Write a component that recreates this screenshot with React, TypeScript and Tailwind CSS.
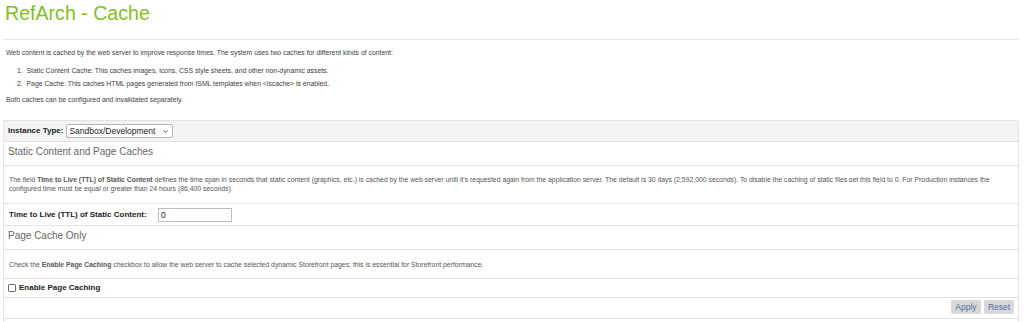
import { ChevronDown } from 'lucide-react';

export default function App() {
    return (
        <div className="min-h-screen bg-white font-['Liberation_Sans',Arial,sans-serif] text-[#3d3d3d]">
            {/* Page title */}
            <h1 className="pt-[2px] pl-[5px] text-[19.6px] leading-[23px] text-[#84bd1f]">RefArch - Cache</h1>
            <div className="mt-[14px] ml-[3px] mr-[5px] border-t border-[#e6e6e6]" />

            {/* Intro */}
            <div className="px-[6px] text-[6.85px] leading-[9px]">
                <p className="mt-[8px]">
                    Web content is cached by the web server to improve response times. The system uses two caches for different kinds of content:
                </p>
                <ol className="mt-[7px] pl-[11px] leading-[13px]">
                    <li>1.&nbsp; Static Content Cache: This caches images, icons, CSS style sheets, and other non-dynamic assets.</li>
                    <li>2.&nbsp; Page Cache: This caches HTML pages generated from ISML templates when &lt;iscache&gt; is enabled.</li>
                </ol>
                <p className="mt-[5px]">Both caches can be configured and invalidated separately.</p>
            </div>

            {/* Settings box */}
            <div className="mt-[16px] ml-[3px] mr-[5px] border-x border-[#e3e3e3]">
                <div className="h-[21px] border-t border-[#e3e3e3] bg-[#f3f3f3] flex items-start pt-[3px] pl-[4px] gap-[3px]">
                    <span className="text-[8px] leading-[14px] font-bold text-[#222]">Instance Type:</span>
                    {/* select look-alike */}
                    <div className="w-[107px] h-[14px] bg-white border border-[#b5b5b5] rounded-[2px] flex items-center justify-between pl-[2px] pr-[3px]">
                        <span className="text-[8.5px] leading-[12px] text-[#222]">Sandbox/Development</span>
                        <ChevronDown size={7} strokeWidth={3} className="text-[#333]" />
                    </div>
                </div>

                <div className="h-[24px] border-t border-[#e3e3e3] pt-[4px] pl-[4px]">
                    <h2 className="text-[10px] leading-[12px] text-[#666]">Static Content and Page Caches</h2>
                </div>

                <div className="h-[38px] border-t border-[#e3e3e3] pt-[9px] pl-[5px] text-[6.85px] leading-[9px] text-[#555]">
                    The field <b>Time to Live (TTL) of Static Content</b> defines the time span in seconds that static content (graphics, etc.) is cached by the web server until it's requested again from the application server. The default is 30 days (2,592,000 seconds). To disable the caching of static files set this field to 0. For Production instances the
                    <br />
                    configured time must be equal or greater than 24 hours (86,400 seconds).
                </div>

                <div className="h-[22px] border-t border-[#e3e3e3] flex items-start pt-[4px] pl-[5px]">
                    <label className="w-[149px] text-[8px] leading-[14px] font-bold text-[#222]">Time to Live (TTL) of Static Content:</label>
                    <input
                        defaultValue="0"
                        className="w-[74px] h-[14px] border border-[#bdbdbd] px-[2px] text-[8.5px] text-[#222] outline-none"
                    />
                </div>

                <div className="h-[24px] border-t border-[#e3e3e3] pt-[4px] pl-[4px]">
                    <h2 className="text-[10px] leading-[12px] text-[#666]">Page Cache Only</h2>
                </div>

                <div className="h-[29px] border-t border-[#e3e3e3] pt-[10px] pl-[5px] text-[6.85px] leading-[9px] text-[#555]">
                    Check the <b>Enable Page Caching</b> checkbox to allow the web server to cache selected dynamic Storefront pages; this is essential for Storefront performance.
                </div>

                <div className="h-[19px] border-t border-[#e3e3e3] flex items-center pl-[4px] gap-[3px]">
                    <input type="checkbox" className="appearance-none w-[8px] h-[8px] border border-[#6f6f6f] rounded-[1px] bg-white" />
                    <span className="text-[8px] leading-[10px] font-bold text-[#222]">Enable Page Caching</span>
                </div>

                <div className="h-[21px] border-t border-[#e3e3e3] flex items-start justify-end pt-[2px] pr-[4px] gap-[3px]">
                    <button className="h-[14px] w-[30px] bg-[#d8d8d8] rounded-[2px] text-[8.5px] text-[#4f6f9c]">Apply</button>
                    <button className="h-[14px] w-[30px] bg-[#d8d8d8] rounded-[2px] text-[8.5px] text-[#4f6f9c]">Reset</button>
                </div>

                <div className="h-[20px] border-t border-[#e3e3e3]" />
            </div>
        </div>
    );
}
